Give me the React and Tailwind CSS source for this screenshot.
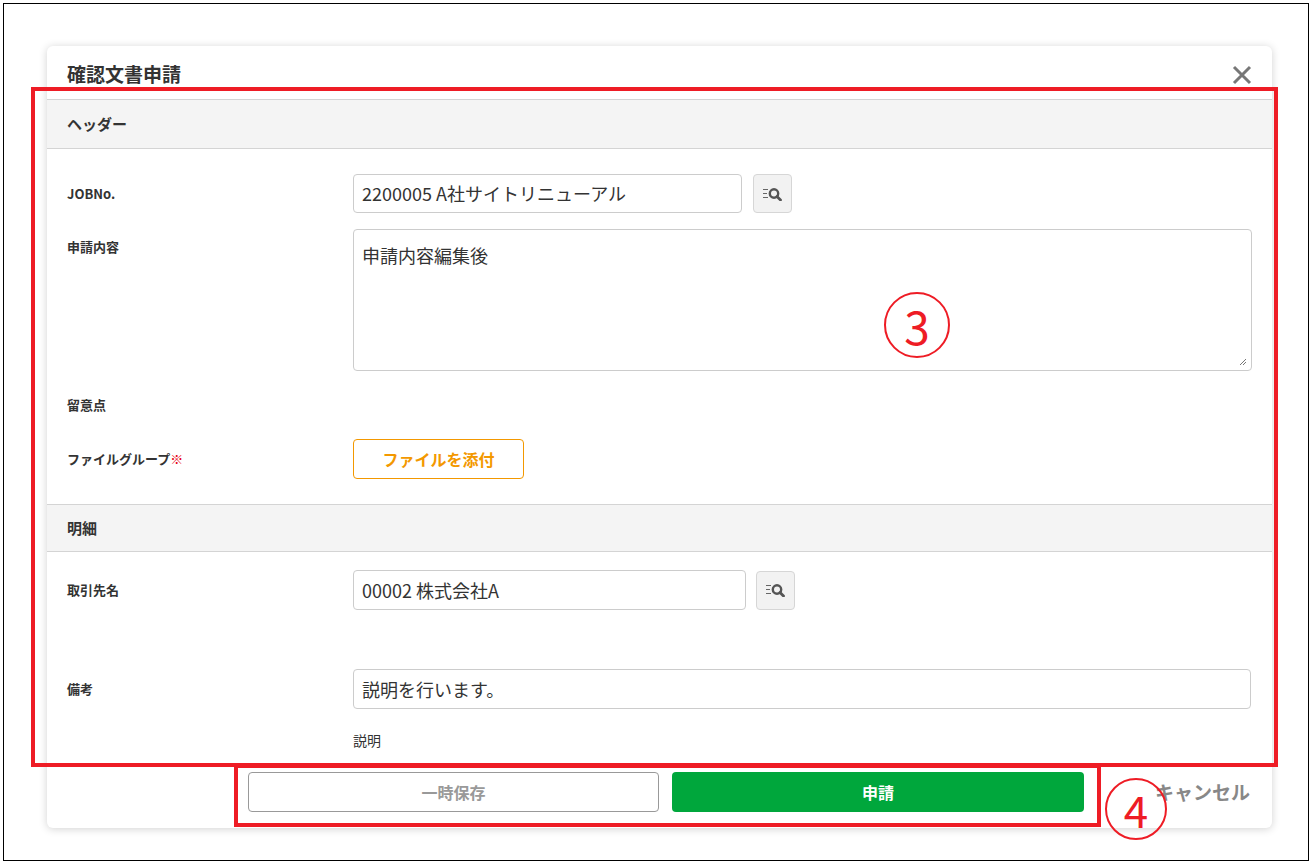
import React from "react";

const SearchBtn = () => (
  <button className="w-[39px] h-[39px] border border-[#d6d6d6] rounded bg-[#f2f2f2] flex items-center justify-center">
    <svg width="22" height="14" viewBox="0 0 22 14">
      <path d="M1 2.5h5M1 6.5h4M1 10.5h5" stroke="#666" strokeWidth="1.2" />
      <circle cx="12" cy="6.5" r="4.2" fill="none" stroke="#555" strokeWidth="2.4" />
      <path d="M15 9.5l3.5 3.5" stroke="#555" strokeWidth="2.8" strokeLinecap="round" />
    </svg>
  </button>
);

const Label = ({ children }) => (
  <div className="w-[286px] shrink-0 text-[13px] font-bold text-[#333]">{children}</div>
);

export default function App() {
  return (
    <div
      className="relative w-[1312px] h-[864px] bg-white p-[3px]"
      style={{ fontFamily: '"Noto Sans CJK JP", "Liberation Sans", sans-serif' }}
    >
      <div className="w-full h-full border border-black pl-[43px] pt-[42px]">
        <div className="w-[1225px] h-[782px] bg-white rounded-md shadow-[0_1px_8px_rgba(0,0,0,0.18)] flex flex-col">
          <div className="h-[53px] flex items-center justify-between px-5 pt-1">
            <div className="text-[19px] font-bold text-[#333]">確認文書申請</div>
            <svg width="20" height="20" viewBox="0 0 20 20" className="mr-0">
              <path d="M2 2l16 16M18 2L2 18" stroke="#777" strokeWidth="3" />
            </svg>
          </div>
          <div className="h-[50px] bg-[#f4f4f4] border-y border-[#d4d4d4] flex items-center px-5 text-[15px] font-bold text-[#333]">
            ヘッダー
          </div>
          <div className="px-5 pt-[25px]">
            <div className="flex items-center h-[39px]">
              <Label>JOBNo.</Label>
              <div className="w-[389px] h-[39px] border border-[#ccc] rounded flex items-center px-2 text-[18px] text-[#333]">
                2200005 A社サイトリニューアル
              </div>
              <div className="ml-[11px]"><SearchBtn /></div>
            </div>
            <div className="flex mt-4">
              <Label><div className="pt-[8px]">申請内容</div></Label>
              <div className="relative w-[899px] h-[142px] border border-[#ccc] rounded px-2 pt-[12px] text-[18px] text-[#333]">
                申請内容編集後
                <svg className="absolute right-[4px] bottom-[4px]" width="8" height="8" viewBox="0 0 8 8">
                  <path d="M7 1L1 7M7 4L4 7" stroke="#777" strokeWidth="1" />
                </svg>
              </div>
            </div>
            <div className="h-[68px] flex items-center">
              <Label>留意点</Label>
            </div>
            <div className="flex items-center h-[40px]">
              <Label>ファイルグループ<span className="text-[#e60012] font-normal">※</span></Label>
              <button className="w-[171px] h-[40px] border border-[#f39800] rounded-sm text-[#f39800] text-[16px] font-bold">
                ファイルを添付
              </button>
            </div>
          </div>
          <div className="mt-[25px] h-[48px] bg-[#f4f4f4] border-y border-[#d4d4d4] flex items-center px-5 text-[15px] font-bold text-[#333]">
            明細
          </div>
          <div className="px-5 pt-[18px]">
            <div className="flex items-center h-[40px]">
              <Label>取引先名</Label>
              <div className="w-[393px] h-[40px] border border-[#ccc] rounded flex items-center px-2 text-[18px] text-[#333]">
                00002 株式会社A
              </div>
              <div className="ml-[10px]"><SearchBtn /></div>
            </div>
            <div className="flex items-center h-[40px] mt-[59px]">
              <Label>備考</Label>
              <div className="w-[898px] h-[40px] border border-[#ccc] rounded flex items-center px-2 text-[18px] text-[#333]">
                説明を行います。
              </div>
            </div>
            <div className="pl-[286px] mt-[21px] text-[14px] text-[#333]">説明</div>
          </div>
          <div className="flex items-center mt-[21px] pl-[201px]">
            <button className="w-[411px] h-[40px] border border-[#999] rounded-sm text-[#999] text-[16px] font-bold">一時保存</button>
            <button className="ml-[13px] w-[412px] h-[40px] bg-[#00a73c] rounded-sm text-white text-[16px] font-bold">申請</button>
            <span className="ml-[71px] text-[19px] font-bold text-[#888]">キャンセル</span>
          </div>
        </div>
      </div>

      {/* annotations */}
      <div className="absolute left-[31px] top-[87px] w-[1247px] h-[680px] border-[4px] border-[#ee1c25]" />
      <div className="absolute left-[234px] top-[764px] w-[867px] h-[63px] border-[4px] border-[#ee1c25]" />
      <div className="absolute left-[884px] top-[292px] w-[66px] h-[66px] rounded-full border-[2px] border-[#ee1c25] flex items-center justify-center text-[46px] leading-none text-[#ee1c25]">3</div>
      <div className="absolute left-[1105px] top-[778px] w-[62px] h-[62px] rounded-full border-[2px] border-[#ee1c25] flex items-center justify-center text-[44px] leading-none text-[#ee1c25]">4</div>
    </div>
  );
}
